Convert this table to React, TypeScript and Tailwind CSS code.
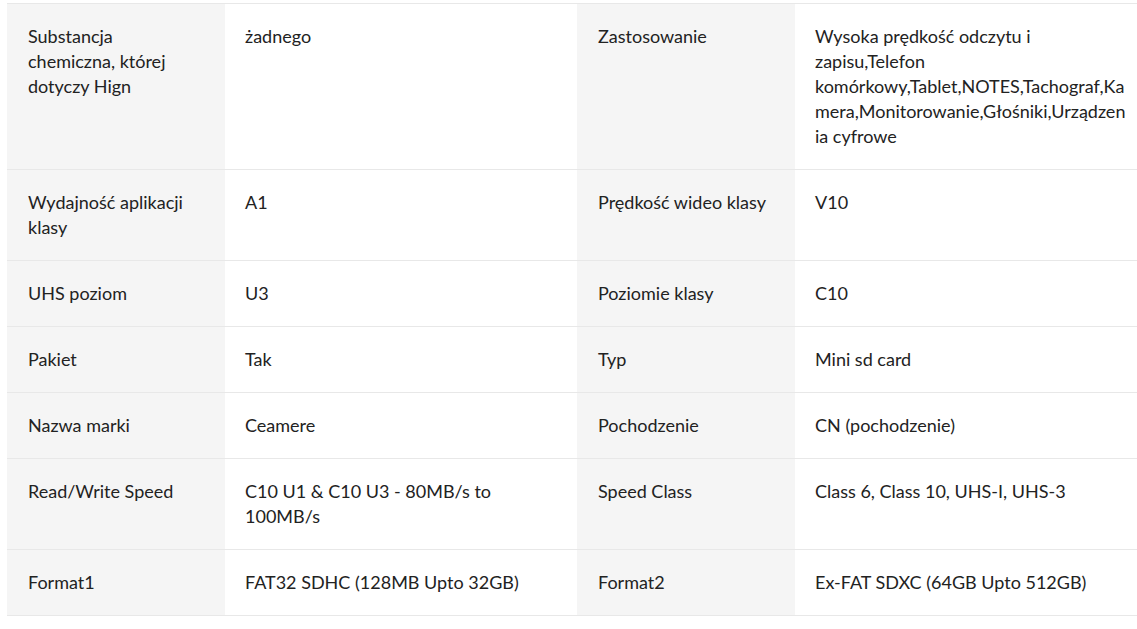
import React from "react";

type Row = {
  label1: string;
  value1: React.ReactNode;
  label2: string;
  value2: React.ReactNode;
};

const rows: Row[] = [
  {
    label1: "Substancja chemiczna, której dotyczy Hign",
    value1: "żadnego",
    label2: "Zastosowanie",
    value2: (
      <>
        Wysoka prędkość odczytu i<br />
        zapisu,Telefon
        <br />
        komórkowy,Tablet,NOTES,Tachograf,Ka
        <br />
        mera,Monitorowanie,Głośniki,Urządzen
        <br />
        ia cyfrowe
      </>
    ),
  },
  {
    label1: "Wydajność aplikacji klasy",
    value1: "A1",
    label2: "Prędkość wideo klasy",
    value2: "V10",
  },
  { label1: "UHS poziom", value1: "U3", label2: "Poziomie klasy", value2: "C10" },
  { label1: "Pakiet", value1: "Tak", label2: "Typ", value2: "Mini sd card" },
  {
    label1: "Nazwa marki",
    value1: "Ceamere",
    label2: "Pochodzenie",
    value2: "CN (pochodzenie)",
  },
  {
    label1: "Read/Write Speed",
    value1: "C10 U1 & C10 U3 - 80MB/s to 100MB/s",
    label2: "Speed Class",
    value2: "Class 6, Class 10, UHS-I, UHS-3",
  },
  {
    label1: "Format1",
    value1: "FAT32 SDHC (128MB Upto 32GB)",
    label2: "Format2",
    value2: "Ex-FAT SDXC (64GB Upto 512GB)",
  },
];

const SpecRow = ({ row }: { row: Row }) => {
  return (
    <div className="grid grid-cols-[218px_352px_218px_1fr] border-b border-[#e8e8e8]">
      <div className="bg-[#f5f5f5] pl-[21px] pr-6 py-5">{row.label1}</div>
      <div className="bg-white px-5 py-5">{row.value1}</div>
      <div className="bg-[#f5f5f5] pl-[21px] pr-6 py-5">{row.label2}</div>
      <div className="bg-white pl-5 py-5 whitespace-nowrap">{row.value2}</div>
    </div>
  );
};

const App = () => {
  return (
    <div className="min-h-screen bg-white pt-[3px] pl-[7px] font-['Lato','Liberation_Sans',sans-serif] text-[18px] leading-[25px] text-[#222]">
      <div className="border-t border-[#e8e8e8]">
        {rows.map((row) => (
          <SpecRow key={row.label1} row={row} />
        ))}
      </div>
    </div>
  );
};

export default App;
